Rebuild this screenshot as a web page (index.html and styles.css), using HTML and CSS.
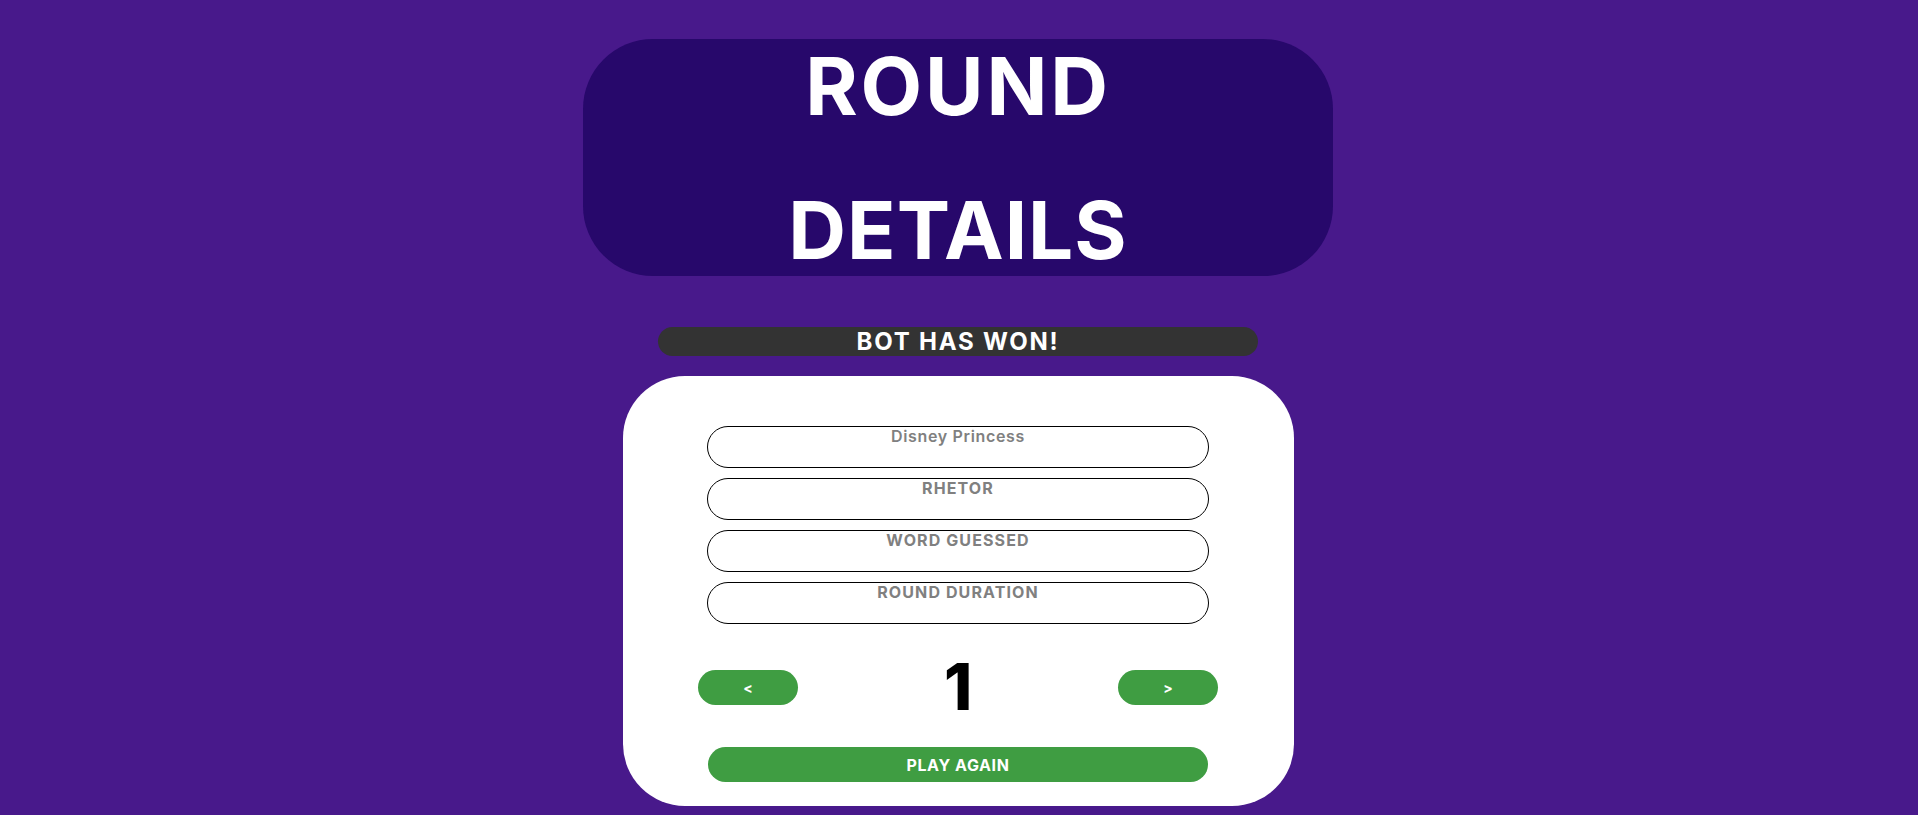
FILE: index.html
```html
<!DOCTYPE html>
<html lang="en">
<head>
<meta charset="utf-8">
<title>Round Details</title>
<link rel="stylesheet" href="styles.css">
</head>
<body>
<main class="page">
  <h1 class="title"><span class="title-top">ROUND</span><span class="title-bottom">DETAILS</span></h1>
  <h2 class="result">BOT HAS WON!</h2>
  <section class="card">
    <div class="fields">
      <div class="field field-name">Disney Princess</div>
      <div class="field">RHETOR</div>
      <div class="field">WORD GUESSED</div>
      <div class="field">ROUND DURATION</div>
    </div>
    <div class="pager">
      <button class="btn btn-nav">&lt;</button>
      <span class="round-num">1</span>
      <button class="btn btn-nav">&gt;</button>
    </div>
    <button class="btn btn-play">PLAY AGAIN</button>
  </section>
</main>
</body>
</html>
```

FILE: styles.css
```css
* { box-sizing: border-box; }
html, body {
  margin: 0;
  padding: 0;
}
body {
  background: #48198b;
  font-family: Inter, "Open Sans", "DejaVu Sans", sans-serif;
  overflow: hidden;
}
.page {
  display: flex;
  flex-direction: column;
  align-items: center;
  padding-top: 39px;
  padding-right: 2px;
}
.title {
  margin: 0;
  width: 750px;
  height: 237px;
  border-radius: 70px;
  background: #27086b;
  color: #fff;
  font-size: 80px;
  font-weight: 700;
  line-height: 144px;
  display: flex;
  flex-direction: column;
  justify-content: center;
  align-items: center;
}
.title-top {
  letter-spacing: 2.8px;
}
.title-bottom {
  letter-spacing: 1px;
}
.result {
  margin: 51px 0 0;
  width: 600px;
  height: 29px;
  line-height: 29px;
  border-radius: 15px;
  background: #333333;
  color: #fff;
  font-size: 24px;
  font-weight: 700;
  text-align: center;
  letter-spacing: 1.8px;
}
.card {
  margin-top: 20px;
  width: 671px;
  height: 430px;
  background: #fff;
  border-radius: 62px;
  padding: 50px 0 24px;
  display: flex;
  flex-direction: column;
  align-items: center;
}
.fields {
  display: flex;
  flex-direction: column;
  gap: 10px;
}
.field {
  width: 502px;
  height: 42px;
  border: 1px solid #000;
  border-radius: 21px;
  color: #808080;
  font-size: 16px;
  font-weight: 700;
  line-height: 19px;
  text-align: center;
  letter-spacing: 1.1px;
}
.field-name {
  font-weight: 600;
  letter-spacing: 0.65px;
}
.pager {
  margin-top: 24px;
  width: 520px;
  height: 78px;
  display: flex;
  justify-content: space-between;
  align-items: center;
}
.round-num {
  font-size: 64px;
  font-weight: 800;
  color: #000;
  line-height: 78px;
}
.btn {
  border: none;
  background: #3f9d42;
  color: #fff;
  font-family: inherit;
  font-weight: 700;
  cursor: pointer;
  padding: 0;
}
.btn-nav {
  width: 100px;
  height: 35px;
  border-radius: 18px;
  font-size: 14px;
}
.btn-play {
  margin-top: 21px;
  width: 500px;
  height: 35px;
  border-radius: 18px;
  font-size: 16px;
  letter-spacing: 0.6px;
}
```
